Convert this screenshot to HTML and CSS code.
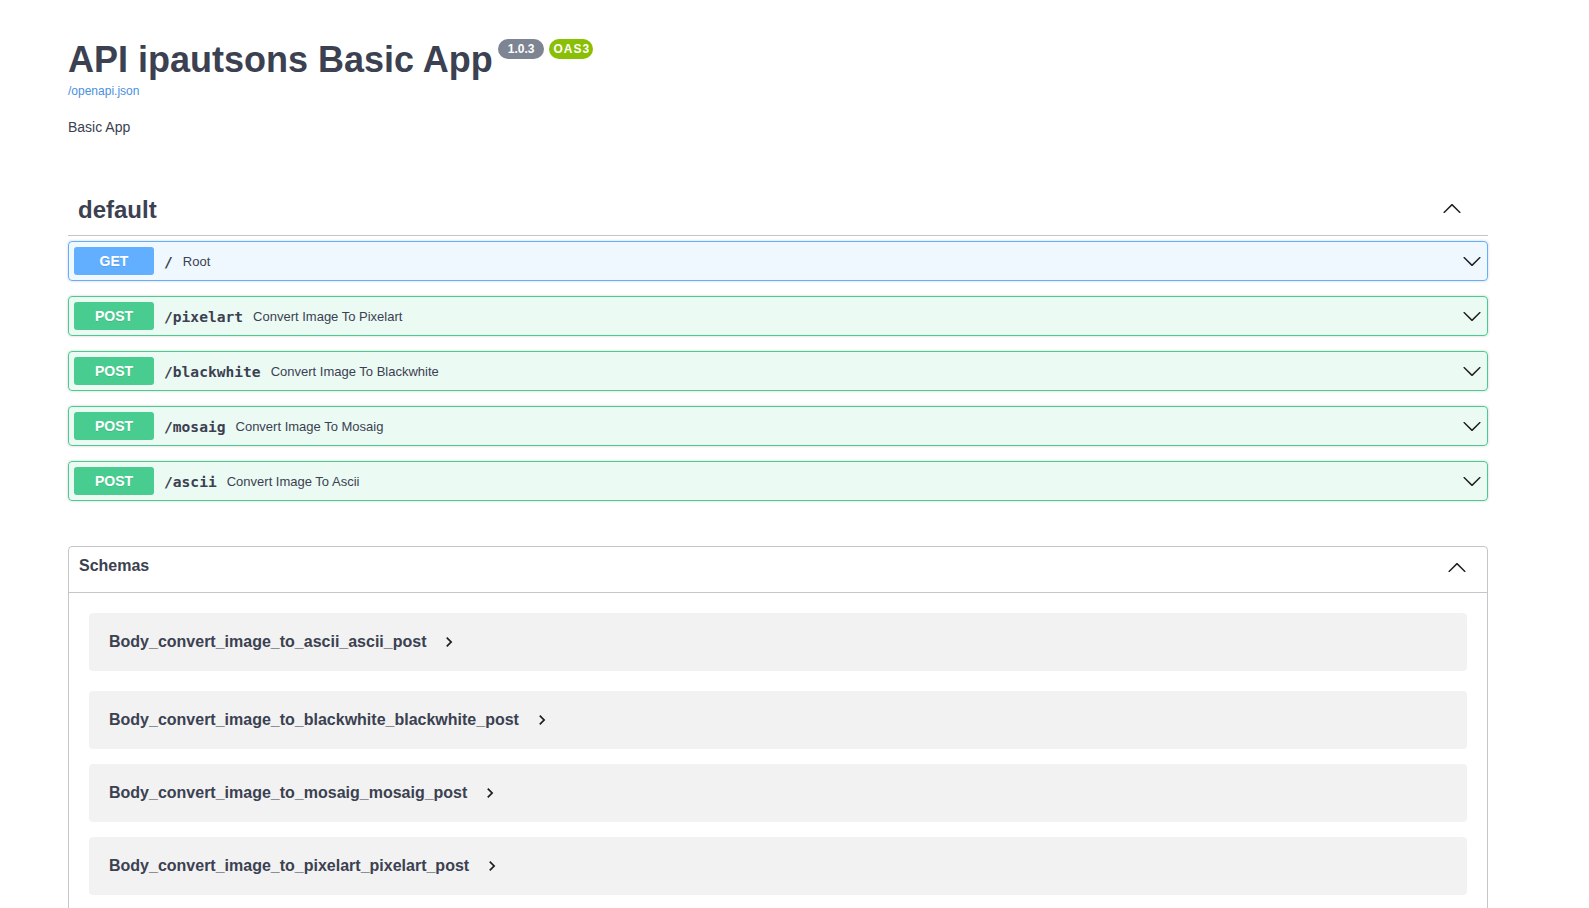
FILE: index.html
```html
<!DOCTYPE html>
<html lang="en">
<head>
<meta charset="utf-8">
<title>API ipautsons Basic App</title>
<link rel="stylesheet" href="styles.css">
</head>
<body>
<div class="wrapper">
  <div class="info">
    <div class="title-row">
      <h2 class="title">API ipautsons Basic App</h2>
      <span class="badge badge-version">1.0.3</span>
      <span class="badge badge-oas">OAS3</span>
    </div>
    <a class="base-url" href="#">/openapi.json</a>
    <p class="description">Basic App</p>
  </div>

  <section class="tag-section">
    <h3 class="tag-header">
      <span class="tag-name">default</span>
      <svg class="arrow arrow-tag" width="20" height="20" viewBox="0 0 20 20"><path d="M17.418 14.908c.272.268.709.268.979 0s.271-.701 0-.969l-7.908-7.83c-.27-.268-.707-.268-.979 0l-7.908 7.83c-.27.268-.27.701 0 .969.271.268.709.268.979 0L10 7.767l7.418 7.141z"/></svg>
    </h3>
    <div class="opblocks">
      <div class="opblock opblock-get">
        <span class="method">GET</span>
        <span class="path">/</span>
        <span class="desc">Root</span>
        <svg class="arrow" width="20" height="20" viewBox="0 0 20 20"><path d="M17.418 6.109c.272-.268.709-.268.979 0s.271.701 0 .969l-7.908 7.83c-.27.268-.707.268-.979 0l-7.908-7.83c-.27-.268-.27-.701 0-.969.271-.268.709-.268.979 0L10 13.25l7.418-7.141z"/></svg>
      </div>
      <div class="opblock opblock-post">
        <span class="method">POST</span>
        <span class="path">/pixelart</span>
        <span class="desc">Convert Image To Pixelart</span>
        <svg class="arrow" width="20" height="20" viewBox="0 0 20 20"><path d="M17.418 6.109c.272-.268.709-.268.979 0s.271.701 0 .969l-7.908 7.83c-.27.268-.707.268-.979 0l-7.908-7.83c-.27-.268-.27-.701 0-.969.271-.268.709-.268.979 0L10 13.25l7.418-7.141z"/></svg>
      </div>
      <div class="opblock opblock-post">
        <span class="method">POST</span>
        <span class="path">/blackwhite</span>
        <span class="desc">Convert Image To Blackwhite</span>
        <svg class="arrow" width="20" height="20" viewBox="0 0 20 20"><path d="M17.418 6.109c.272-.268.709-.268.979 0s.271.701 0 .969l-7.908 7.83c-.27.268-.707.268-.979 0l-7.908-7.83c-.27-.268-.27-.701 0-.969.271-.268.709-.268.979 0L10 13.25l7.418-7.141z"/></svg>
      </div>
      <div class="opblock opblock-post">
        <span class="method">POST</span>
        <span class="path">/mosaig</span>
        <span class="desc">Convert Image To Mosaig</span>
        <svg class="arrow" width="20" height="20" viewBox="0 0 20 20"><path d="M17.418 6.109c.272-.268.709-.268.979 0s.271.701 0 .969l-7.908 7.83c-.27.268-.707.268-.979 0l-7.908-7.83c-.27-.268-.27-.701 0-.969.271-.268.709-.268.979 0L10 13.25l7.418-7.141z"/></svg>
      </div>
      <div class="opblock opblock-post">
        <span class="method">POST</span>
        <span class="path">/ascii</span>
        <span class="desc">Convert Image To Ascii</span>
        <svg class="arrow" width="20" height="20" viewBox="0 0 20 20"><path d="M17.418 6.109c.272-.268.709-.268.979 0s.271.701 0 .969l-7.908 7.83c-.27.268-.707.268-.979 0l-7.908-7.83c-.27-.268-.27-.701 0-.969.271-.268.709-.268.979 0L10 13.25l7.418-7.141z"/></svg>
      </div>
    </div>
  </section>

  <section class="models">
    <h4 class="models-header">
      <span>Schemas</span>
      <svg class="arrow" width="20" height="20" viewBox="0 0 20 20"><path d="M17.418 14.908c.272.268.709.268.979 0s.271-.701 0-.969l-7.908-7.83c-.27-.268-.707-.268-.979 0l-7.908 7.83c-.27.268-.27.701 0 .969.271.268.709.268.979 0L10 7.767l7.418 7.141z"/></svg>
    </h4>
    <div class="model-list">
      <div class="model-item"><span class="model-title">Body_convert_image_to_ascii_ascii_post</span><svg class="toggle" width="20" height="20" viewBox="0 0 24 24"><path d="M10 6L8.59 7.41 13.17 12l-4.58 4.59L10 18l6-6z"/></svg></div>
      <div class="model-item"><span class="model-title">Body_convert_image_to_blackwhite_blackwhite_post</span><svg class="toggle" width="20" height="20" viewBox="0 0 24 24"><path d="M10 6L8.59 7.41 13.17 12l-4.58 4.59L10 18l6-6z"/></svg></div>
      <div class="model-item"><span class="model-title">Body_convert_image_to_mosaig_mosaig_post</span><svg class="toggle" width="20" height="20" viewBox="0 0 24 24"><path d="M10 6L8.59 7.41 13.17 12l-4.58 4.59L10 18l6-6z"/></svg></div>
      <div class="model-item"><span class="model-title">Body_convert_image_to_pixelart_pixelart_post</span><svg class="toggle" width="20" height="20" viewBox="0 0 24 24"><path d="M10 6L8.59 7.41 13.17 12l-4.58 4.59L10 18l6-6z"/></svg></div>
      <div class="model-item"><span class="model-title">HTTPValidationError</span><svg class="toggle" width="20" height="20" viewBox="0 0 24 24"><path d="M10 6L8.59 7.41 13.17 12l-4.58 4.59L10 18l6-6z"/></svg></div>
      <div class="model-item"><span class="model-title">ValidationError</span><svg class="toggle" width="20" height="20" viewBox="0 0 24 24"><path d="M10 6L8.59 7.41 13.17 12l-4.58 4.59L10 18l6-6z"/></svg></div>
    </div>
  </section>
</div>
</body>
</html>
```

FILE: styles.css
```css
* { box-sizing: border-box; }

html, body {
  margin: 0;
  padding: 0;
  background: #fff;
}

body {
  font-family: "Liberation Sans", Arial, sans-serif;
  color: #3b4151;
}

.wrapper {
  width: 1420px;
  margin: 0 0 0 68px;
  padding: 39px 0 40px;
}

/* ---- info ---- */
.title-row {
  display: flex;
  align-items: flex-start;
}

.title {
  margin: 0;
  font-size: 36px;
  font-weight: 700;
  line-height: normal;
  color: #3b4151;
}

.badge {
  display: inline-block;
  margin-top: 0;
  height: 20px;
  line-height: 20px;
  border-radius: 57px;
  font-size: 12px;
  font-weight: 700;
  color: #fff;
}

.badge-version {
  margin-left: 5px;
  padding: 0 10px;
  background: #7d8492;
}

.badge-oas {
  margin-left: 5px;
  padding: 0 3px 0 4px;
  letter-spacing: 1px;
  background: #89bf04;
}

.base-url {
  display: block;
  margin-top: 3px;
  font-size: 12px;
  line-height: normal;
  color: #4990e2;
  text-decoration: none;
  width: max-content;
}

.description {
  margin: 21px 0 0;
  font-size: 14px;
  line-height: normal;
  color: #3b4151;
}

/* ---- tag ---- */
.tag-section {
  margin-top: 51px;
}

.tag-header {
  display: flex;
  align-items: center;
  margin: 0 0 5px;
  padding: 10px 26px 11px 10px;
  font-size: 24px;
  font-weight: 700;
  line-height: normal;
  color: #3b4151;
  border-bottom: 1px solid rgba(59, 65, 81, .3);
}

.tag-name {
  flex: 1;
}

.arrow {
  flex: none;
  fill: #1f1f1f;
}

.arrow-tag {
  margin-bottom: 4px;
}

.opblocks {
  display: flex;
  flex-direction: column;
  gap: 15px;
}

.opblock {
  display: flex;
  align-items: center;
  padding: 5px;
  border: 1px solid;
  border-radius: 4px;
  box-shadow: 0 0 3px rgba(0, 0, 0, .19);
}

.opblock-get {
  background: rgba(97, 175, 254, .1);
  border-color: #61affe;
}

.opblock-post {
  background: rgba(73, 204, 144, .1);
  border-color: #49cc90;
}

.method {
  flex: none;
  min-width: 80px;
  padding: 6px 0;
  border-radius: 3px;
  font-size: 14px;
  font-weight: 700;
  line-height: normal;
  text-align: center;
  color: #fff;
  text-shadow: 0 1px 0 rgba(0, 0, 0, .1);
}

.opblock-get .method { background: #61affe; }
.opblock-post .method { background: #49cc90; }

.path {
  flex: none;
  padding: 0 10px;
  font-family: "DejaVu Sans Mono", "Liberation Mono", monospace;
  font-size: 14.6px;
  font-weight: 700;
  color: #3b4151;
}

.desc {
  flex: 1;
  font-size: 13px;
  color: #3b4151;
}

/* ---- models ---- */
.models {
  margin-top: 45px;
  border: 1px solid rgba(59, 65, 81, .3);
  border-radius: 4px;
}

.models-header {
  display: flex;
  align-items: flex-start;
  justify-content: space-between;
  margin: 0;
  height: 46px;
  padding: 10px 20px 0 10px;
  font-size: 16px;
  font-weight: 700;
  line-height: normal;
  color: #3b4151;
  border-bottom: 1px solid rgba(59, 65, 81, .3);
}

.model-list {
  display: flex;
  flex-direction: column;
  gap: 15px;
  padding: 20px;
}

.model-item {
  display: flex;
  align-items: center;
  height: 58px;
  padding: 0 20px;
  border-radius: 4px;
  background: rgba(0, 0, 0, .05);
}

.model-item:first-child {
  margin-bottom: 5px;
}

.model-title {
  font-size: 16px;
  font-weight: 700;
  color: #3b4151;
}

.toggle {
  flex: none;
  margin-left: 13px;
  fill: #1f1f1f;
}
```
